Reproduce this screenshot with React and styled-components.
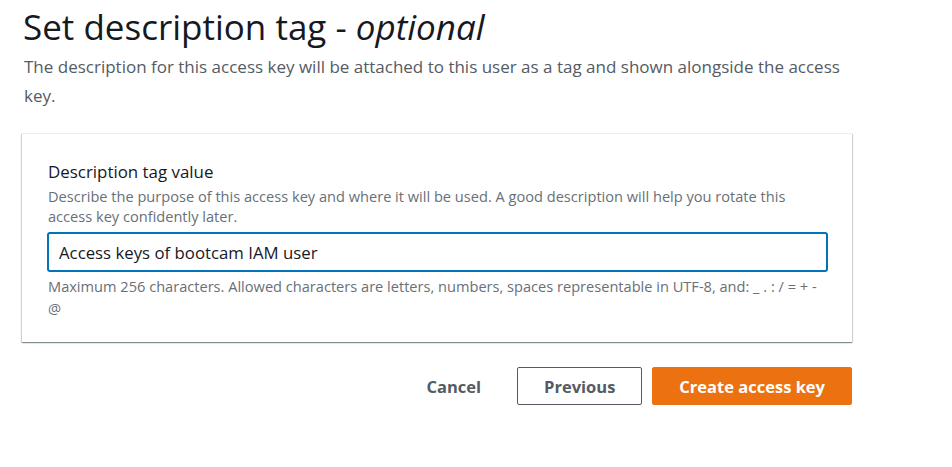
import React from "react";
import styled, { createGlobalStyle } from "styled-components";

const Global = createGlobalStyle`
  html, body { margin: 0; padding: 0; background: #ffffff; }
  body { font-family: "Open Sans", "Noto Sans", Arial, sans-serif; color: #16191f; }
  * { box-sizing: border-box; }
`;

const Page = styled.main`
  width: 852px;
  padding: 2px 0 0 22px;
  display: flex;
  flex-direction: column;
`;

const Title = styled.h1`
  margin: 0 0 0 1px;
  font-size: 35px;
  line-height: 50px;
  font-weight: 400;
  color: #16191f;
  em { font-style: italic; }
`;

const Lead = styled.p`
  margin: 0 0 0 2px;
  font-size: 17px;
  line-height: 29px;
  color: #545b64;
`;

const Card = styled.section`
  margin-top: 23px;
  background: #fff;
  border-top: 1px solid #eaeded;
  box-shadow: 0 1px 1px 0 rgba(0, 28, 36, 0.3), 1px 1px 1px 0 rgba(0, 28, 36, 0.15),
    -1px 1px 1px 0 rgba(0, 28, 36, 0.15);
  padding: 27px 24px 23px 25px;
  display: flex;
  flex-direction: column;
`;

const Label = styled.label`
  font-size: 16.9px;
  line-height: 22px;
  color: #16191f;
  padding-left: 1px;
`;

const Hint = styled.p`
  margin: ${(p) => p.$top || 0}px 0 0 0;
  padding-left: 1px;
  font-size: 14.6px;
  line-height: ${(p) => p.$lh || 20}px;
  color: #687078;
`;

const Input = styled.input`
  margin-top: 6px;
  width: 781px;
  height: 40px;
  border: 2px solid #0073bb;
  border-radius: 3px;
  padding: 0 10px;
  font-family: inherit;
  font-size: 16.8px;
  color: #16191f;
  outline: none;
  background: #fff;
`;

const Actions = styled.div`
  margin-top: 25px;
  display: flex;
  justify-content: flex-end;
  align-items: center;
  gap: 10px;
`;

const Button = styled.button`
  height: 38px;
  padding: 0 ${(p) => (p.$variant === "link" ? 20 : 26)}px;
  font-family: inherit;
  font-size: 16.5px;
  font-weight: 700;
  border-radius: 2px;
  cursor: pointer;
  margin-left: ${(p) => (p.$variant === "normal" ? 5 : 0)}px;
  color: ${(p) => (p.$variant === "primary" ? "#fff" : "#545b64")};
  background: ${(p) => (p.$variant === "primary" ? "#ec7211" : "#fff")};
  border: 1px solid
    ${(p) =>
      p.$variant === "primary" ? "#ec7211" : p.$variant === "normal" ? "#545b64" : "transparent"};
  min-width: ${(p) => (p.$variant === "normal" ? 125 : 0)}px;
`;

export default function App() {
  return (
    <>
      <Global />
      <Page>
        <Title>
          Set description tag - <em>optional</em>
        </Title>
        <Lead>
          The description for this access key will be attached to this user as a tag and shown
          alongside the access key.
        </Lead>
        <Card>
          <Label htmlFor="desc">Description tag value</Label>
          <Hint $top={3}>
            Describe the purpose of this access key and where it will be used. A good description
            will help you rotate this access key confidently later.
          </Hint>
          <Input id="desc" defaultValue="Access keys of bootcam IAM user" />
          <Hint $top={3} $lh={22}>
            Maximum 256 characters. Allowed characters are letters, numbers, spaces representable in
            UTF-8, and: _ . : / = + - @
          </Hint>
        </Card>
        <Actions>
          <Button $variant="link">Cancel</Button>
          <Button $variant="normal">Previous</Button>
          <Button $variant="primary">Create access key</Button>
        </Actions>
      </Page>
    </>
  );
}
